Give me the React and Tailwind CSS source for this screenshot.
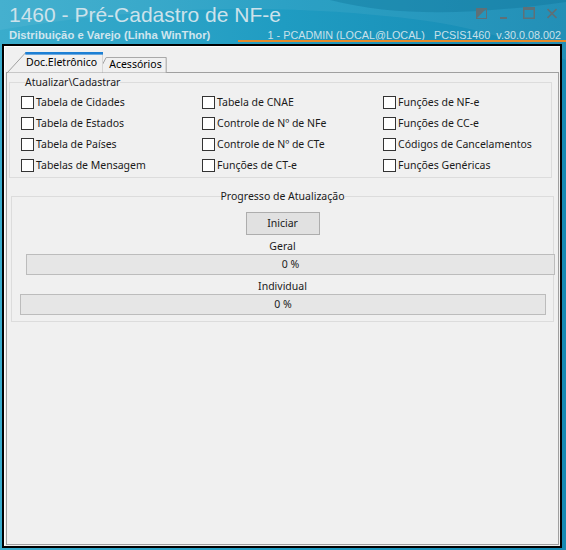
import React from "react";

const itens = [
  ["Tabela de Cidades", "Tabela de CNAE", "Funções de NF-e"],
  ["Tabela de Estados", "Controle de Nº de NFe", "Funções de CC-e"],
  ["Tabela de Países", "Controle de Nº de CTe", "Códigos de Cancelamentos"],
  ["Tabelas de Mensagem", "Funções de CT-e", "Funções Genéricas"],
];

function Checkbox({ label }) {
  return (
    <label className="flex items-center h-[21px] gap-[2px] text-[#1a1a1a]">
      <span className="w-[13px] h-[13px] border border-[#333] bg-white shrink-0" />
      <span>{label}</span>
    </label>
  );
}

function Tab({ label, active }) {
  return (
    <div
      className={
        "relative flex items-center " +
        (active ? "h-[21px] pl-[19px] pr-[6px] -mr-[5px] z-10" : "h-[16px] pl-[11px] pr-[5px]")
      }
    >
      <svg className="absolute inset-0 w-full h-full" preserveAspectRatio="none" viewBox="0 0 100 20">
        {active ? (
          <>
            <polygon points="0,20 19,1 100,1 100,20" fill="#f0f0f0" stroke="#a0a0a0" strokeWidth="1" vectorEffect="non-scaling-stroke" />
            <rect x="19" y="0" width="81" height="2.5" fill="#1c7fd4" />
          </>
        ) : (
          <polygon points="0,20 12,0.5 99.5,0.5 99.5,20" fill="#f0f0f0" stroke="#a0a0a0" strokeWidth="1" vectorEffect="non-scaling-stroke" />
        )}
      </svg>
      <span className="relative">{label}</span>
    </div>
  );
}

function Barra({ className }) {
  return (
    <div className={"h-[21px] border border-[#bcbcbc] bg-[#e6e6e6] flex items-center justify-center " + className}>
      0 %
    </div>
  );
}

export default function App() {
  return (
    <div className="relative w-[566px] h-[550px] overflow-hidden flex flex-col bg-gradient-to-r from-[#3aaccc] via-[#1f9cc2] to-[#1689b2] font-['Noto_Sans',sans-serif] text-[10.5px]">
      {/* faixa clara do cabeçalho */}
      <svg className="absolute left-0 top-0 w-[566px] h-[550px]" viewBox="0 0 566 550">
        <path d="M0,30 C120,10 260,0 420,20 C480,28 530,45 566,60 L566,0 L0,0 Z" fill="#ffffff" opacity="0.06" />
        <path d="M330,0 C400,18 480,14 566,2 L566,0 Z" fill="#0b6f96" opacity="0.35" />
      </svg>

      {/* cabeçalho */}
      <div className="relative h-[44px] shrink-0 font-['Liberation_Sans',sans-serif]">
        <div className="absolute left-[9px] top-[2px] text-[21px] leading-[26px] text-[#cde2eb]">
          1460 - Pré-Cadastro de NF-e
        </div>
        <div className="absolute left-[9px] top-[28px] text-[11.3px] leading-[14px] font-bold text-[#cfe5ee]">
          Distribuição e Varejo (Linha WinThor)
        </div>
        <div className="absolute right-[5px] top-[28px] text-[10.8px] leading-[14px] text-[#c9e1ea] flex gap-[9px]">
          <span>1 - PCADMIN (LOCAL@LOCAL)</span>
          <span>PCSIS1460</span>
          <span className="-ml-[3px]">v.30.0.08.002</span>
        </div>
        <div className="absolute left-[238px] right-0 top-[40px] h-[2px] bg-[#e58a2a]" />

        {/* botões da janela */}
        <div className="absolute right-[9px] top-[7px] flex items-center text-[#5f7077]">
          <svg width="11" height="11" viewBox="0 0 11 11">
            <rect x="0.5" y="0.5" width="10" height="10" fill="none" stroke="currentColor" />
            <polygon points="0,0 11,0 0,11" fill="currentColor" />
          </svg>
          <svg width="7" height="12" viewBox="0 0 7 12" className="ml-[13px]">
            <rect x="0" y="10" width="7" height="2" fill="currentColor" />
          </svg>
          <svg width="12" height="12" viewBox="0 0 12 12" className="ml-[16px]">
            <rect x="0.75" y="0.75" width="10.5" height="10.5" fill="none" stroke="currentColor" strokeWidth="1.5" />
            <rect x="0" y="0" width="12" height="3" fill="currentColor" />
          </svg>
          <svg width="10" height="11" viewBox="0 0 10 11" className="ml-[12px]">
            <path d="M0.5,1 L9.5,10 M9.5,1 L0.5,10" stroke="currentColor" strokeWidth="1.7" />
          </svg>
        </div>
      </div>

      {/* janela */}
      <div className="relative ml-[2px] mr-[4px] mb-[2px] flex-1 border-2 border-black bg-[#f0f0f0] flex flex-col">
        <div className="flex-1 flex flex-col border-l border-t border-white pl-[1px] pt-[4px] pr-[1px] pb-[1px]">
          {/* abas */}
          <div className="flex items-end h-[22px] pl-[1px]">
            <Tab label="Doc.Eletrônico" active />
            <Tab label="Acessórios" />
          </div>

          <div className="flex-1 border border-[#a0a0a0] -mt-px pt-[2px] pr-[4px] text-[#1a1a1a]">
            <fieldset className="ml-[2px] mr-[2px] border border-[#dcdcdc] pl-[11px] pb-[1px] pt-[3px]">
              <legend className="ml-[4px] px-0 leading-[14px]">Atualizar\Cadastrar</legend>
              <div className="grid grid-cols-[181px_181px_1fr]">
                {itens.flatMap((linha) => linha.map((t) => <Checkbox key={t} label={t} />))}
              </div>
            </fieldset>

            <fieldset className="ml-[4px] mt-[11px] border border-[#dcdcdc] pt-[9px] pb-[6px] flex flex-col">
              <legend className="mx-auto px-0 leading-[14px]">Progresso de Atualização</legend>
              <div className="flex justify-center">
                <div className="w-[74px] h-[23px] border border-[#adadad] bg-[#e1e1e1] flex items-center justify-center">
                  Iniciar
                </div>
              </div>
              <div className="text-center mt-[3px] leading-[16px]">Geral</div>
              <Barra className="ml-[14px] -mr-[2px]" />
              <div className="text-center mt-[3px] leading-[16px]">Individual</div>
              <Barra className="ml-[8px] mr-[7px]" />
            </fieldset>
          </div>
        </div>
      </div>
    </div>
  );
}
